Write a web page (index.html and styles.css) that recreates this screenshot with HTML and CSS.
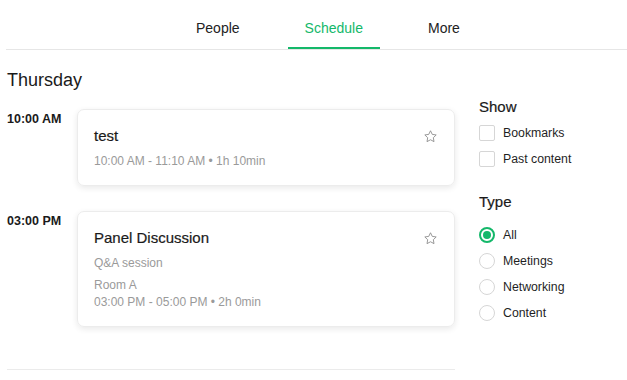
FILE: index.html
```html
<!DOCTYPE html>
<html>
<head>
<meta charset="utf-8">
<link rel="stylesheet" href="styles.css">
</head>
<body>
<nav class="tabs">
  <a class="tab">People</a>
  <a class="tab active">Schedule</a>
  <a class="tab">More</a>
</nav>
<div class="page">
  <main class="main">
    <h1 class="day">Thursday</h1>
    <div class="row">
      <div class="time">10:00 AM</div>
      <div class="card">
        <div class="card-head">
          <div class="title">test</div>
          <svg class="star" viewBox="0 0 24 24" width="15" height="15"><path d="M12 2.8l2.8 5.8 6.3.9-4.6 4.4 1.1 6.3L12 17.2l-5.6 3 1.1-6.3-4.6-4.4 6.3-.9z" fill="none" stroke="#8a8a8a" stroke-width="1.4" stroke-linejoin="round"/></svg>
        </div>
        <div class="meta first">10:00 AM - 11:10 AM • 1h 10min</div>
      </div>
    </div>
    <div class="row">
      <div class="time">03:00 PM</div>
      <div class="card">
        <div class="card-head">
          <div class="title">Panel Discussion</div>
          <svg class="star" viewBox="0 0 24 24" width="15" height="15"><path d="M12 2.8l2.8 5.8 6.3.9-4.6 4.4 1.1 6.3L12 17.2l-5.6 3 1.1-6.3-4.6-4.4 6.3-.9z" fill="none" stroke="#8a8a8a" stroke-width="1.4" stroke-linejoin="round"/></svg>
        </div>
        <div class="meta first">Q&amp;A session</div>
        <div class="meta room">Room A</div>
        <div class="meta tight">03:00 PM - 05:00 PM • 2h 0min</div>
      </div>
    </div>
    <div class="end-line"></div>
  </main>
  <aside class="side">
    <h2 class="side-title">Show</h2>
    <label class="opt"><span class="box"></span>Bookmarks</label>
    <label class="opt"><span class="box"></span>Past content</label>
    <h2 class="side-title type">Type</h2>
    <label class="opt"><span class="radio on"></span>All</label>
    <label class="opt"><span class="radio"></span>Meetings</label>
    <label class="opt"><span class="radio"></span>Networking</label>
    <label class="opt"><span class="radio"></span>Content</label>
  </aside>
</div>
</body>
</html>
```
FILE: styles.css
```css
* { box-sizing: border-box; }
html, body { margin: 0; padding: 0; background: #fff; }
body {
  font-family: "Liberation Sans", Arial, sans-serif;
  color: #1f1f1f;
  width: 627px;
  overflow: hidden;
}
.tabs {
  display: flex;
  gap: 32px;
  margin-left: 6px;
  padding-left: 174px;
  border-bottom: 1px solid #e6e6e6;
  height: 50px;
}
.tab {
  display: block;
  font-size: 14px;
  line-height: 20px;
  padding: 18px 16px 0;
  height: 49px;
  color: #222;
  border-bottom: 2px solid transparent;
}
.tab.active {
  color: #14b86a;
  border-bottom-color: #14b86a;
  padding: 18px 17px 0;
}
.page {
  display: flex;
  padding-left: 7px;
  gap: 24px;
}
.main { width: 448px; }
.day {
  margin: 18px 0 17px;
  font-size: 18px;
  line-height: 24px;
  font-weight: normal;
  color: #1a1a1a;
}
.row {
  display: flex;
  margin-bottom: 25px;
}
.time {
  width: 70px;
  flex: none;
  font-size: 12.5px;
  font-weight: bold;
  line-height: 20px;
  color: #1a1a1a;
}
.card {
  flex: 1;
  border: 1px solid #ececec;
  border-radius: 7px;
  box-shadow: 0 2px 6px rgba(0,0,0,0.09);
  padding: 16px 16px 15px;
}
.card-head {
  display: flex;
  justify-content: space-between;
  align-items: center;
}
.title {
  font-size: 15px;
  line-height: 20px;
  color: #1a1a1a;
  -webkit-text-stroke: 0.2px #1a1a1a;
}
.meta {
  font-size: 12px;
  line-height: 17px;
  color: #9a9a9a;
}
.meta.first { margin-top: 7px; }
.meta.room { margin-top: 5px; }
.end-line {
  margin-top: 42px;
  height: 1px;
  background: #ebebeb;
}
.side { width: 148px; padding-top: 47px; }
.side-title {
  margin: 0 0 3px;
  font-size: 15px;
  line-height: 20px;
  font-weight: normal;
  color: #1a1a1a;
  -webkit-text-stroke: 0.2px #1a1a1a;
}
.side-title.type { margin-top: 20px; margin-bottom: 10px; }
.opt {
  display: flex;
  align-items: center;
  gap: 8px;
  height: 26px;
  font-size: 12.3px;
  color: #1f1f1f;
}
.box {
  width: 16px;
  height: 16px;
  border: 1px solid #d6d6d6;
  border-radius: 2px;
}
.radio {
  width: 16px;
  height: 16px;
  border: 1px solid #d6d6d6;
  border-radius: 50%;
  display: flex;
  align-items: center;
  justify-content: center;
}
.radio.on { border: 2px solid #14b86a; }
.radio.on::after {
  content: "";
  width: 8px;
  height: 8px;
  border-radius: 50%;
  background: #14b86a;
}
```
